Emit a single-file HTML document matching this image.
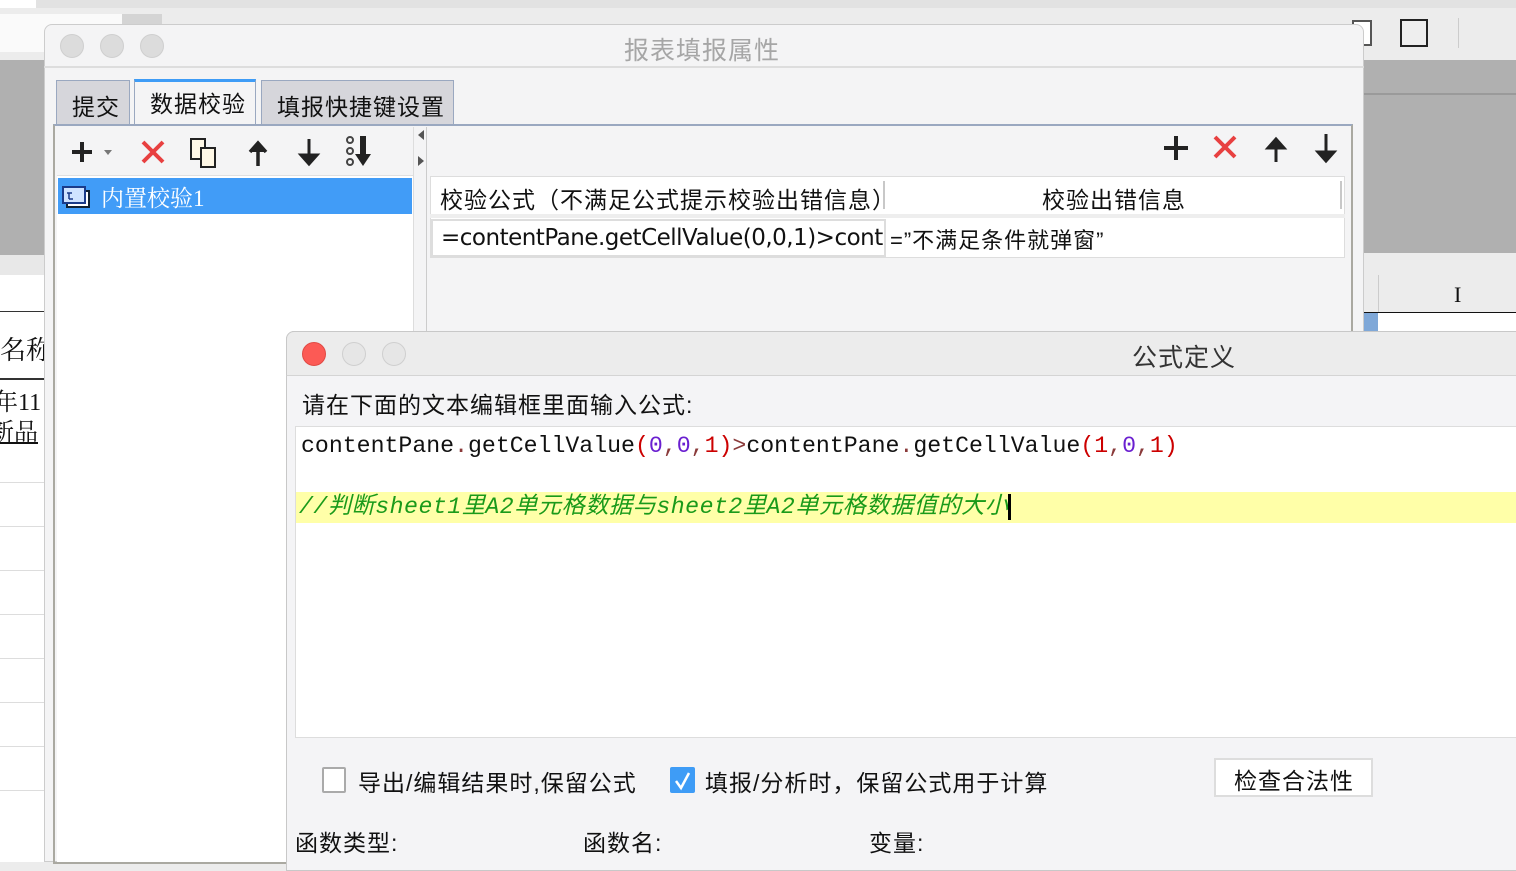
<!DOCTYPE html>
<html><head><meta charset="utf-8"><style>
*{margin:0;padding:0;box-sizing:border-box}
body{width:1516px;height:862px;overflow:hidden;position:relative;background:#ececec;font-family:"Liberation Sans","Noto Sans CJK SC",sans-serif;color:#111}
.a{position:absolute}
.t{white-space:nowrap}
.c{font-size:23px;letter-spacing:1px}
.dot{position:absolute;width:24px;height:24px;border-radius:50%;background:#dcdcdc;border:1px solid #cfcfcf}
.mono{font-family:"Liberation Mono","Noto Sans CJK SC",monospace}
</style></head><body>
<!-- background app -->
<div class="a" style="left:0;top:0;width:1516px;height:8px;background:#e2e2e2"></div>
<div class="a" style="left:0;top:0;width:36px;height:8px;background:#fff"></div>
<div class="a" style="left:0;top:14px;width:160px;height:38px;background:#fafafa"></div>
<div class="a" style="left:122px;top:14px;width:40px;height:38px;background:#d4d4d4"></div>
<div class="a" style="left:0;top:60px;width:44px;height:195px;background:#b0b0b0"></div>
<div class="a" style="left:0;top:255px;width:44px;height:607px;background:#fff"></div>
<div class="a" style="left:0;top:255px;width:44px;height:20px;background:#e8e8e8"></div>
<div class="a" style="left:0;top:311px;width:44px;height:1px;background:#333"></div>
<div class="a" style="left:0;top:378px;width:44px;height:2px;background:#333"></div>
<div class="a t" style="left:0;top:330px;font-size:26px;font-family:'Liberation Serif','Noto Serif CJK SC',serif">名称</div>
<div class="a t" style="left:-6px;top:382px;font-size:24px;font-family:'Liberation Serif','Noto Serif CJK SC',serif">年11</div>
<div class="a t" style="left:-10px;top:412px;font-size:24px;font-family:'Liberation Serif','Noto Serif CJK SC',serif;text-decoration:underline">新品</div>
<div class="a" style="left:0;top:482px;width:44px;height:1px;background:#ddd"></div>
<div class="a" style="left:0;top:526px;width:44px;height:1px;background:#ddd"></div>
<div class="a" style="left:0;top:570px;width:44px;height:1px;background:#ddd"></div>
<div class="a" style="left:0;top:614px;width:44px;height:1px;background:#ddd"></div>
<div class="a" style="left:0;top:658px;width:44px;height:1px;background:#ddd"></div>
<div class="a" style="left:0;top:702px;width:44px;height:1px;background:#ddd"></div>
<div class="a" style="left:0;top:746px;width:44px;height:1px;background:#ddd"></div>
<div class="a" style="left:0;top:790px;width:44px;height:1px;background:#ddd"></div>
<div class="a" style="left:1364px;top:60px;width:152px;height:193px;background:#b0b0b0"></div>
<div class="a" style="left:1364px;top:93px;width:152px;height:2px;background:#9a9a9a"></div>
<div class="a" style="left:1364px;top:253px;width:152px;height:60px;background:#ececec"></div>
<div class="a" style="left:1378px;top:275px;width:1px;height:38px;background:#ccc"></div>
<div class="a t" style="left:1454px;top:282px;font-size:22px;font-family:'Liberation Serif',serif">I</div>
<div class="a" style="left:1364px;top:312px;width:152px;height:20px;background:#fff"></div>
<div class="a" style="left:1364px;top:312px;width:152px;height:1px;background:#111"></div>
<div class="a" style="left:1364px;top:313px;width:14px;height:19px;background:#7fa8d8"></div>
<div class="a" style="left:1400px;top:19px;width:28px;height:28px;border:2px solid #222;background:#eee"></div>
<div class="a" style="left:1458px;top:18px;width:1px;height:30px;background:#ccc"></div>
<div class="a" style="left:1352px;top:20px;width:20px;height:26px;border:2px solid #555;background:#fff"></div>

<!-- main dialog -->
<div class="a" style="left:44px;top:24px;width:1320px;height:838px;background:#f4f4f5;border:1px solid #ccc;border-radius:8px 8px 0 0"></div>
<div class="a" style="left:44px;top:66px;width:1320px;height:2px;background:#ddd"></div>
<div class="dot" style="left:60px;top:34px"></div>
<div class="dot" style="left:100px;top:34px"></div>
<div class="dot" style="left:140px;top:34px"></div>
<div class="a t" style="left:624px;top:31px;font-size:25px;letter-spacing:1px;color:#a6a6a6">报表填报属性</div>
<!-- tabs -->
<div class="a" style="left:56px;top:80px;width:74px;height:44px;background:#d6d6db;border:1px solid #9aa8c0;border-bottom:none"></div>
<div class="a t c" style="left:72px;top:88px">提交</div>
<div class="a" style="left:134px;top:79px;width:122px;height:46px;background:#f4f4f5;border:1px solid #9aa8c0;border-top:3px solid #3e9cf6;border-bottom:none"></div>
<div class="a t c" style="left:150px;top:85px">数据校验</div>
<div class="a" style="left:261px;top:80px;width:193px;height:44px;background:#d6d6db;border:1px solid #9aa8c0;border-bottom:none"></div>
<div class="a t c" style="left:277px;top:88px">填报快捷键设置</div>
<!-- content panel -->
<div class="a" style="left:53px;top:124px;width:1300px;height:740px;border:2px solid #aaa9a1;border-top-color:#9aa8c0"></div>
<div class="a" style="left:57px;top:127px;width:356px;height:735px;background:#fff"></div>
<div class="a" style="left:57px;top:127px;width:356px;height:49px;background:#f4f4f5;border-bottom:1px solid #e0e0e0"></div>
<div class="a" style="left:413px;top:127px;width:14px;height:735px;background:#f4f4f5;border-left:1px solid #ddd;border-right:1px solid #ccc"></div>
<div class="a" style="left:418px;top:130px;width:0;height:0;border:5px solid transparent;border-right:6px solid #555;border-left:none"></div>
<div class="a" style="left:418px;top:156px;width:0;height:0;border:5px solid transparent;border-left:6px solid #555;border-right:none"></div>
<svg class="a" style="left:60px;top:130px" width="330" height="46">
 <path d="M12 22h20M22 12v20" stroke="#222" stroke-width="4"/>
 <path d="M44 20l8 0l-4 5z" fill="#777"/>
 <path d="M83 12l20 20M103 12l-20 20" stroke="#e84040" stroke-width="4"/>
 <rect x="131" y="9" width="14" height="20" fill="#fff8e6" stroke="#222" stroke-width="2"/>
 <rect x="141" y="18" width="14" height="19" fill="#fff8e6" stroke="#222" stroke-width="2"/>
 <path d="M198 36V14M190 22l8-9l8 9" stroke="#222" stroke-width="3.5" fill="#222"/>
 <path d="M249 9v22M241 25l8 9l8-9z" stroke="#222" stroke-width="3" fill="#222"/>
 <circle cx="290" cy="10" r="3" fill="none" stroke="#444" stroke-width="2"/>
 <circle cx="290" cy="21" r="3" fill="none" stroke="#444" stroke-width="2"/>
 <circle cx="290" cy="32" r="3" fill="none" stroke="#444" stroke-width="2"/>
 <path d="M303 6v22" stroke="#222" stroke-width="6"/><path d="M295 24h16l-8 12z" fill="#222"/>
</svg>
<div class="a" style="left:58px;top:178px;width:354px;height:36px;background:#419cf7"></div>
<svg class="a" style="left:62px;top:186px" width="30" height="24"><rect x="5" y="5" width="22" height="16" fill="#fff" stroke="#123" stroke-width="2"/><rect x="1" y="1" width="22" height="16" fill="#cfe3ff" stroke="#1a3b8a" stroke-width="2"/><path d="M5 7h5M7 7v6M7 13h4" stroke="#1a3b8a" stroke-width="1.5"/></svg>
<div class="a t" style="left:101px;top:180px;font-size:23px;color:#fff;font-family:'Liberation Serif','Noto Serif CJK SC',serif">内置校验1</div>
<!-- right pane -->
<svg class="a" style="left:1160px;top:130px" width="180" height="40">
 <path d="M4 18h24M16 6v24" stroke="#222" stroke-width="4"/>
 <path d="M55 7l20 20M75 7l-20 20" stroke="#e84040" stroke-width="4"/>
 <path d="M116 32V10M108 18l8-9l8 9z" stroke="#222" stroke-width="3" fill="#222"/>
 <path d="M166 4v24M158 22l8 9l8-9z" stroke="#222" stroke-width="3" fill="#222"/>
</svg>
<div class="a" style="left:430px;top:176px;width:915px;height:82px;background:#fff;border:1px solid #ddd"></div>
<div class="a" style="left:430px;top:214px;width:915px;height:4px;background:#eee"></div>
<div class="a" style="left:883px;top:181px;width:2px;height:28px;background:#c8c8c8"></div>
<div class="a" style="left:1340px;top:181px;width:2px;height:28px;background:#c8c8c8"></div>
<div class="a t c" style="left:440px;top:181px">校验公式（不满足公式提示校验出错信息）</div>
<div class="a t c" style="left:1042px;top:181px">校验出错信息</div>
<div class="a" style="left:431px;top:219px;width:455px;height:38px;border:2px solid #ddd;background:#fff;overflow:hidden"><div class="t" style="padding:4px 0 0 8px;font-size:23px;font-family:'DejaVu Sans','Noto Sans CJK SC',sans-serif;letter-spacing:-0.5px">=contentPane.getCellValue(0,0,1)&gt;contentPane</div></div>
<div class="a t" style="left:890px;top:223px;font-size:22px;letter-spacing:1px">=”不满足条件就弹窗”</div>

<!-- formula dialog -->
<div class="a" style="left:286px;top:331px;width:1240px;height:540px;background:#f4f4f6;border:1px solid #c8c8c8;border-radius:8px 0 0 0"></div>
<div class="a" style="left:286px;top:331px;width:1240px;height:45px;background:#ececec;border:1px solid #c8c8c8;border-radius:8px 0 0 0;border-bottom:1px solid #d4d4d4"></div>
<div class="a" style="left:302px;top:342px;width:24px;height:24px;border-radius:50%;background:#fc5a55;border:1px solid #e04a44"></div>
<div class="dot" style="left:342px;top:342px;background:#e6e6e6"></div>
<div class="dot" style="left:382px;top:342px;background:#e6e6e6"></div>
<div class="a t" style="left:1132px;top:338px;font-size:25px;letter-spacing:1px;color:#333">公式定义</div>
<div class="a t c" style="left:302px;top:386px">请在下面的文本编辑框里面输入公式:</div>
<div class="a" style="left:295px;top:426px;width:1230px;height:312px;background:#fff;border:1px solid #ddd"></div>
<div class="a" style="left:296px;top:492px;width:1230px;height:31px;background:#ffffa8"></div>
<div class="a t mono" style="left:301px;top:431px;font-size:23.2px;line-height:30px">contentPane<span style="color:#8a3a3a">.</span>getCellValue<span style="color:#c00">(</span><span style="color:#6a1fd0">0</span><span style="color:#8a3a3a">,</span><span style="color:#6a1fd0">0</span><span style="color:#8a3a3a">,</span><span style="color:#c00">1)</span><span style="color:#8a3a3a">&gt;</span>contentPane<span style="color:#8a3a3a">.</span>getCellValue<span style="color:#c00">(1</span><span style="color:#8a3a3a">,</span><span style="color:#6a1fd0">0</span><span style="color:#8a3a3a">,</span><span style="color:#c00">1)</span></div>
<div class="a t mono" style="left:299px;top:492px;font-size:23.2px;line-height:30px;color:#1a9a1a;font-style:italic;letter-spacing:0.5px">//判断sheet1里A2单元格数据与sheet2里A2单元格数据值的大小</div>
<div class="a" style="left:1008px;top:494px;width:3px;height:26px;background:#000"></div>
<div class="a" style="left:322px;top:767px;width:24px;height:26px;background:#fff;border:2px solid #aaa;border-radius:2px"></div>
<div class="a t c" style="left:358px;top:764px">导出/编辑结果时,保留公式</div>
<div class="a" style="left:670px;top:767px;width:25px;height:26px;background:#3e9cf6;border-radius:2px"></div>
<svg class="a" style="left:670px;top:767px" width="25" height="26"><path d="M6 14l5 7l8-15" stroke="#fff" stroke-width="2.5" fill="none"/></svg>
<div class="a t c" style="left:705px;top:764px">填报/分析时，保留公式用于计算</div>
<div class="a" style="left:1214px;top:758px;width:159px;height:39px;background:#fff;border:2px solid #ddd"></div>
<div class="a t c" style="left:1234px;top:762px">检查合法性</div>
<div class="a t c" style="left:295px;top:824px">函数类型:</div>
<div class="a t c" style="left:583px;top:824px">函数名:</div>
<div class="a t c" style="left:869px;top:824px">变量:</div>
</body></html>
